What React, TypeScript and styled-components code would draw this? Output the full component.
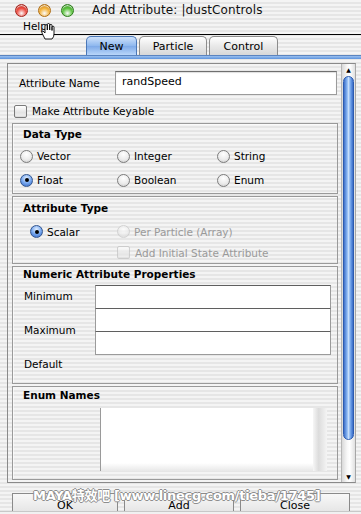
import styled, { createGlobalStyle, css } from "styled-components";

const GlobalStyle = createGlobalStyle`
  html, body {
    margin: 0;
    padding: 0;
  }
  body {
    width: 361px;
    height: 514px;
    overflow: hidden;
    font-family: "Lucida Grande", "DejaVu Sans", sans-serif;
    font-size: 10.5px;
    color: #000;
  }
`;

const pinstripe = css`
  background: repeating-linear-gradient(
    to bottom,
    #f4f4f4 0px,
    #f4f4f4 2px,
    #e6e6e6 2px,
    #e6e6e6 4px
  );
`;

//window chrome
const Window = styled.div`
  position: relative;
  width: 361px;
  height: 514px;
  display: flex;
  flex-direction: column;
  overflow: hidden;
  ${pinstripe}
`;

const TitleBar = styled.div`
  height: 20px;
  display: flex;
  align-items: center;
  padding-left: 15px;
  box-sizing: border-box;
`;

const Light = styled.span<{ $color: string; $dark: string }>`
  width: 13px;
  height: 13px;
  border-radius: 50%;
  margin-right: 10px;
  box-sizing: border-box;
  border: 1px solid ${(p) => p.$dark};
  background: radial-gradient(
    circle at 50% 75%,
    #ffffffaa 0%,
    ${(p) => p.$color} 50%,
    ${(p) => p.$dark} 100%
  );
  box-shadow: inset 0 1px 1px #ffffffcc;
`;

const Title = styled.span`
  margin-left: 8px;
  font-size: 12px;
  letter-spacing: 0.1px;
  color: #111;
`;

const MenuBar = styled.div`
  position: relative;
  height: 15px;
  border-bottom: 1px solid #000;
  box-sizing: border-box;
  padding-left: 23px;
  line-height: 13px;
  font-size: 10.5px;
`;

const Cursor = styled.svg`
  position: absolute;
  left: 40px;
  top: 3px;
`;

const TabRow = styled.div`
  margin-top: 1px;
  height: 19px;
  padding-left: 86px;
  display: flex;
  align-items: flex-end;
`;

const Tab = styled.div<{ $active?: boolean; $w: number }>`
  width: ${(p) => p.$w}px;
  height: 19px;
  margin-right: 2px;
  box-sizing: border-box;
  border: 1px solid #8c8c8c;
  border-bottom: none;
  border-radius: 5px 5px 0 0;
  display: flex;
  align-items: center;
  justify-content: center;
  font-size: 11px;
  background: linear-gradient(#ffffff, #e9e9e9 50%, #d8d8d8);
  ${(p) =>
    p.$active &&
    css`
      border-color: #4b78b8;
      background: linear-gradient(#cfe2fb, #8db7ee 50%, #7eaae8 51%, #b9d6fa);
    `}
`;

const TabLine = styled.div`
  height: 3px;
  background: linear-gradient(#9cc1f0, #5d93dc);
  border-top: 1px solid #5b84c0;
`;

const Body = styled.div`
  padding: 4px 5px 0 7px;
`;

const Pane = styled.div`
  display: flex;
  height: 420px;
  box-sizing: border-box;
  border: 1px solid #8a8a8a;
  border-right-color: #a6a6a6;
`;

const Content = styled.div`
  flex: 1;
  padding: 7px 3px 0 4px;
  display: flex;
  flex-direction: column;
`;

//form parts
const NameRow = styled.div`
  display: flex;
  align-items: center;
  height: 24px;
`;

const FieldLabel = styled.span<{ $w: number }>`
  width: ${(p) => p.$w}px;
  padding-left: 7px;
  box-sizing: border-box;
`;

const TextBox = styled.div`
  flex: 1;
  height: 24px;
  box-sizing: border-box;
  background: #fff;
  border: 1px solid #9b9b9b;
  border-top-color: #6f6f6f;
  box-shadow: inset 0 1px 1px #00000022;
  padding: 3px 0 0 6px;
  font-size: 11px;
  margin-right: 1px;
`;

const CheckRow = styled.label<{ $disabled?: boolean; $pad?: number }>`
  display: flex;
  align-items: center;
  gap: 5px;
  padding-left: ${(p) => p.$pad ?? 0}px;
  color: ${(p) => (p.$disabled ? "#9a9a9a" : "#000")};
`;

const Check = styled.span<{ $disabled?: boolean }>`
  width: 13px;
  height: 13px;
  box-sizing: border-box;
  border-radius: 2px;
  border: 1px solid #7a7a7a;
  background: linear-gradient(#ffffff, #e4e4e4 60%, #f2f2f2);
  box-shadow: inset 0 -1px 1px #00000018;
  ${(p) =>
    p.$disabled &&
    css`
      border-color: #c4c4c4;
      opacity: 0.75;
    `}
`;

const Group = styled.div<{ $h: number }>`
  height: ${(p) => p.$h}px;
  box-sizing: border-box;
  border: 1px solid #9a9a9a;
  box-shadow: inset 1px 1px 0 #ffffff99;
  display: flex;
  flex-direction: column;
`;

const GroupTitle = styled.div<{ $top: number }>`
  padding: ${(p) => p.$top}px 0 0 10px;
  line-height: 13px;
  font-weight: bold;
  font-size: 10.5px;
`;

const RadioGrid = styled.div<{ $cols: string; $row: number; $top: number; $pad: number }>`
  display: grid;
  grid-template-columns: ${(p) => p.$cols};
  grid-auto-rows: ${(p) => p.$row}px;
  margin-top: ${(p) => p.$top}px;
  padding-left: ${(p) => p.$pad}px;
`;

const Option = styled.label<{ $disabled?: boolean }>`
  display: flex;
  align-items: center;
  gap: 4px;
  color: ${(p) => (p.$disabled ? "#9a9a9a" : "#000")};
`;

const Radio = styled.span<{ $on?: boolean; $disabled?: boolean }>`
  position: relative;
  width: 13px;
  height: 13px;
  flex: none;
  border-radius: 50%;
  box-sizing: border-box;
  border: 1px solid #7d7d7d;
  background: radial-gradient(
    circle at 50% 30%,
    #ffffff 0%,
    #ececec 55%,
    #c9c9c9 100%
  );
  ${(p) =>
    p.$on &&
    css`
      border-color: #33568f;
      background: radial-gradient(
        circle at 50% 30%,
        #e4f0ff 0%,
        #7aaaf0 50%,
        #2f63c4 100%
      );
      &::after {
        content: "";
        position: absolute;
        left: 3.5px;
        top: 3.5px;
        width: 4px;
        height: 4px;
        border-radius: 50%;
        background: #000;
      }
    `}
  ${(p) =>
    p.$disabled &&
    css`
      border-color: #c6c6c6;
      opacity: 0.7;
    `}
`;

const NumericBody = styled.div`
  display: flex;
`;

const LabelStack = styled.div`
  width: 82px;
  margin-top: -2px;
  padding-left: 11px;
  box-sizing: border-box;
  display: flex;
  flex-direction: column;
  line-height: 34px;
`;

const InputStack = styled.div`
  width: 236px;
  margin-top: 4px;
  display: flex;
  flex-direction: column;
`;

const StackBox = styled.div`
  height: 24px;
  box-sizing: border-box;
  background: #fff;
  border: 1px solid #9b9b9b;
  border-top-color: #5f5f5f;
  margin-top: -1px;
  &:first-child {
    margin-top: 0;
  }
`;

const ListBox = styled.div`
  margin: 6px 0 0 87px;
  width: 227px;
  height: 63px;
  box-sizing: border-box;
  border-left: 1px solid #9a9a9a;
  display: flex;
  background: linear-gradient(to bottom, #fff 0, #fff 55px, #e8e8e8 63px);
`;

const ListArea = styled.div`
  flex: 1;
`;

const ListTrack = styled.div`
  width: 14px;
  background: linear-gradient(to right, #f6f6f6, #dcdcdc 40%, #f4f4f4);
`;

//scrollbar
const Scrollbar = styled.div`
  width: 13px;
  display: flex;
  flex-direction: column;
  align-items: center;
  border-left: 1px solid #b6b6b6;
  background: linear-gradient(to right, #d9d9d9, #f8f8f8 40%, #fff 60%, #e0e0e0);
`;

const Arrow = styled.div`
  height: 11px;
  width: 100%;
  display: flex;
  align-items: center;
  justify-content: center;
  font-size: 6px;
  line-height: 1;
  color: #000;
`;

const Thumb = styled.div`
  width: 11px;
  height: 364px;
  margin-top: 1px;
  box-sizing: border-box;
  border-radius: 6px;
  border: 1px solid #2c5bb0;
  background: linear-gradient(
    to right,
    #3d6fc9,
    #8bb8f4 35%,
    #c6defb 50%,
    #6c9fe8 75%,
    #3a6cc8
  );
`;

const Track = styled.div`
  flex: 1;
`;

//buttons
const ButtonRow = styled.div`
  display: flex;
  gap: 6px;
  padding: 10px 11px 0 12px;
  height: 18px;
`;

const Button = styled.div<{ $w: number }>`
  width: ${(p) => p.$w}px;
  height: 20px;
  box-sizing: border-box;
  border: 1px solid #8a8a8a;
  border-bottom: none;
  background: linear-gradient(#f8f8f8, #e4e4e4);
  text-align: center;
  font-size: 11px;
  padding-top: 5px;
`;

const BottomStrip = styled.div`
  flex: 1;
  background: #f1f1f1;
  border-top: 1px solid #c8c8c8;
  position: relative;
  z-index: 1;
`;

const Watermark = styled.div`
  position: absolute;
  left: 33px;
  top: 485px;
  z-index: 2;
  font-family: "DejaVu Sans", "Noto Sans CJK SC", sans-serif;
  font-weight: bold;
  font-size: 13px;
  letter-spacing: -0.3px;
  color: #fff;
  text-shadow: 1px 0 0 #8d8d8d, -1px 0 0 #8d8d8d, 0 1px 0 #8d8d8d,
    0 -1px 0 #8d8d8d;
  white-space: nowrap;
`;

export default function App() {
  return (
    <Window>
      <GlobalStyle />
      <TitleBar>
        <Light $color="#ee4b3f" $dark="#a3231b" />
        <Light $color="#f5b33a" $dark="#b06d12" />
        <Light $color="#5cc43e" $dark="#2c7d1b" />
        <Title>Add Attribute: |dustControls</Title>
      </TitleBar>
      <MenuBar>
        Help
        <Cursor width="16" height="17" viewBox="0 0 16 17">
          <path
            d="M5 16 L2 10 Q1 8 3 8 L5 10 L5 3 Q5 1.5 6.2 1.5 Q7.3 1.5 7.3 3 L7.3 7 L7.3 1.8 Q7.3 0.5 8.5 0.5 Q9.7 0.5 9.7 1.8 L9.7 7 L9.7 2.6 Q9.7 1.4 10.9 1.4 Q12 1.4 12 2.6 L12 7.5 L12 4.2 Q12 3.2 13 3.2 Q14 3.2 14 4.2 L14 11 Q14 14 12 16 Z"
            fill="#fff"
            stroke="#000"
            strokeWidth="0.9"
            strokeLinejoin="round"
          />
        </Cursor>
      </MenuBar>
      <TabRow>
        <Tab $active $w={51}>New</Tab>
        <Tab $w={68}>Particle</Tab>
        <Tab $w={69}>Control</Tab>
      </TabRow>
      <TabLine />
      <Body>
        <Pane>
          <Content>
            <NameRow>
              <FieldLabel $w={103}>Attribute Name</FieldLabel>
              <TextBox>randSpeed</TextBox>
            </NameRow>
            <CheckRow $pad={2} style={{ marginTop: 10, height: 12 }}>
              <Check />
              Make Attribute Keyable
            </CheckRow>

            <Group $h={71} style={{ marginTop: 6 }}>
              <GroupTitle $top={4}>Data Type</GroupTitle>
              <RadioGrid $cols="97px 100px auto" $row={24} $top={3} $pad={7}>
                <Option><Radio />Vector</Option>
                <Option><Radio />Integer</Option>
                <Option><Radio />String</Option>
                <Option><Radio $on />Float</Option>
                <Option><Radio />Boolean</Option>
                <Option><Radio />Enum</Option>
              </RadioGrid>
            </Group>

            <Group $h={68} style={{ marginTop: 2 }}>
              <GroupTitle $top={5}>Attribute Type</GroupTitle>
              <RadioGrid $cols="87px auto" $row={21} $top={6} $pad={17}>
                <Option><Radio $on />Scalar</Option>
                <Option $disabled><Radio $disabled />Per Particle (Array)</Option>
                <span />
                <CheckRow $disabled>
                  <Check $disabled />
                  Add Initial State Attribute
                </CheckRow>
              </RadioGrid>
            </Group>

            <Group $h={118} style={{ marginTop: 2 }}>
              <GroupTitle $top={1}>Numeric Attribute Properties</GroupTitle>
              <NumericBody>
                <LabelStack>
                  <span>Minimum</span>
                  <span>Maximum</span>
                  <span>Default</span>
                </LabelStack>
                <InputStack>
                  <StackBox />
                  <StackBox />
                  <StackBox />
                </InputStack>
              </NumericBody>
            </Group>

            <Group $h={94} style={{ marginTop: 2 }}>
              <GroupTitle $top={2}>Enum Names</GroupTitle>
              <ListBox>
                <ListArea />
                <ListTrack />
              </ListBox>
            </Group>
          </Content>
          <Scrollbar>
            <Arrow>▲</Arrow>
            <Thumb />
            <Track />
            <Arrow>▼</Arrow>
          </Scrollbar>
        </Pane>
      </Body>
      <ButtonRow>
        <Button $w={106}>OK</Button>
        <Button $w={110}>Add</Button>
        <Button $w={110}>Close</Button>
      </ButtonRow>
      <BottomStrip />
      <Watermark>MAYA特效吧 [www.linecg.com/tieba/1745]</Watermark>
    </Window>
  );
}
